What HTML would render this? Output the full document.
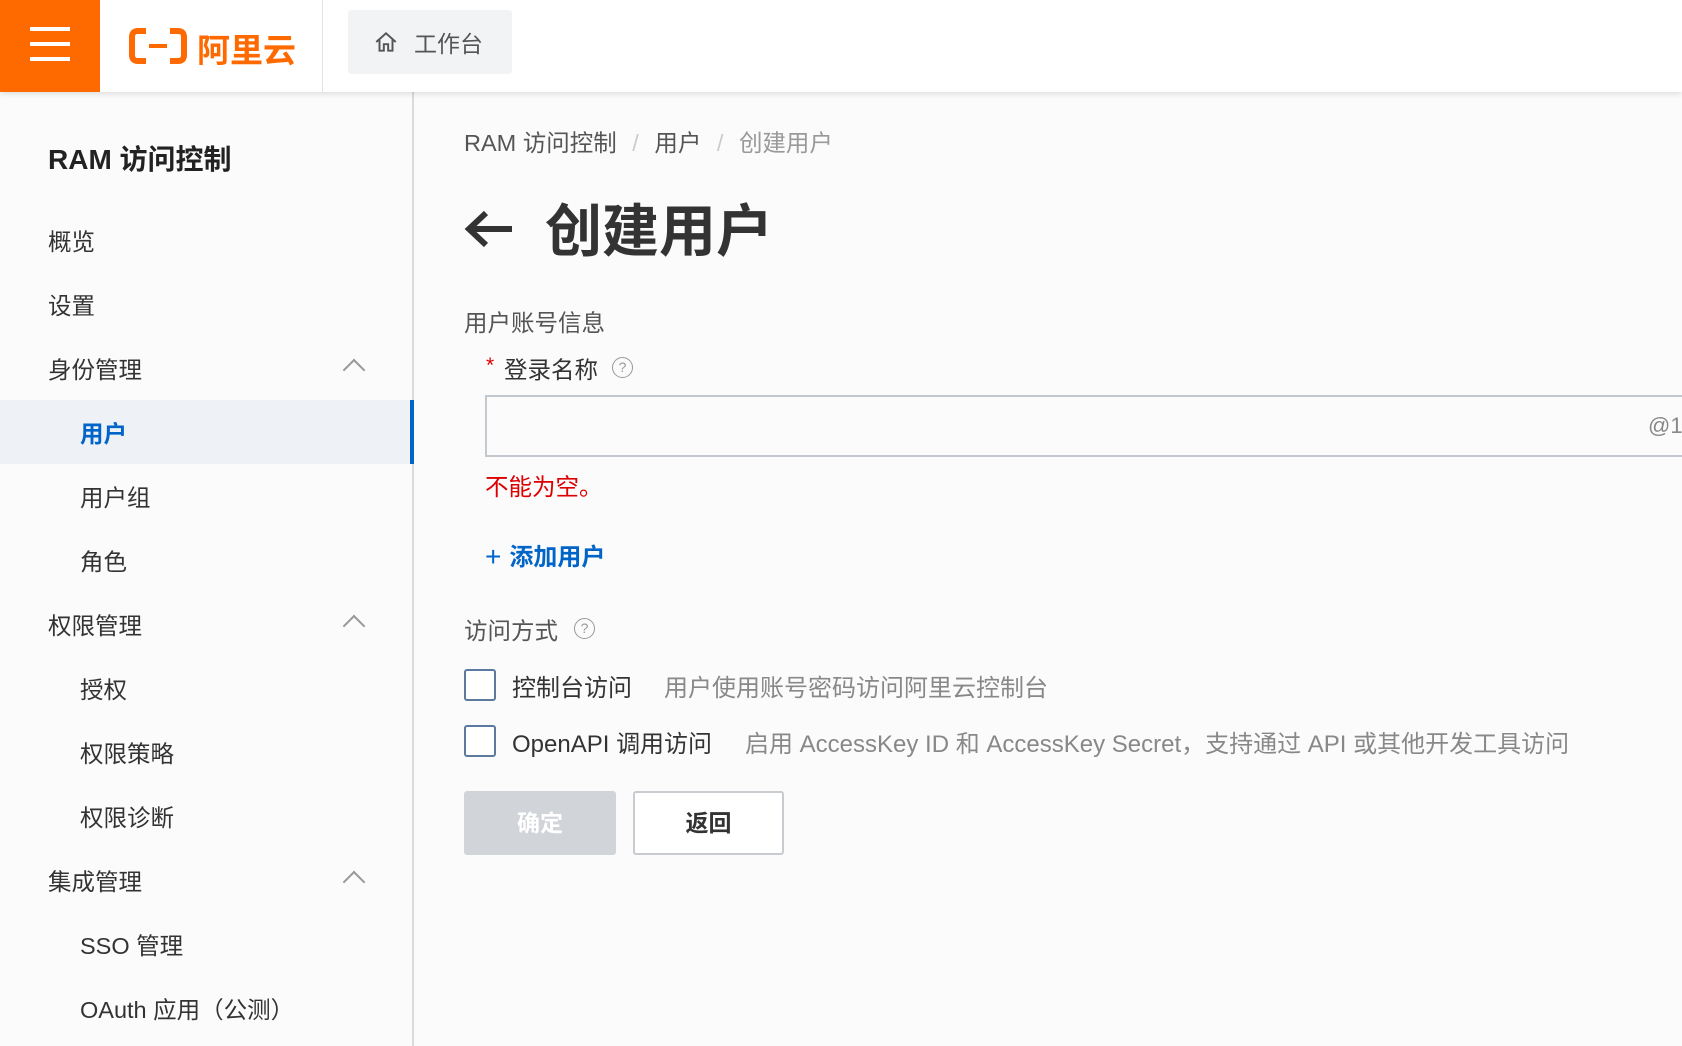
<!DOCTYPE html>
<html><head><meta charset="utf-8"><style>
*{margin:0;padding:0;box-sizing:border-box}
body{width:1682px;height:1046px;overflow:hidden;background:#fbfbfb;font-family:"Liberation Sans","Noto Sans CJK SC",sans-serif;color:#333;position:relative}
.a{position:absolute;white-space:nowrap}
.hdr{position:absolute;left:0;top:0;width:1682px;height:92px;background:#fff;box-shadow:0 2px 6px rgba(0,0,0,.12);z-index:2}
.side{position:absolute;left:0;top:92px;width:414px;height:954px;background:#fbfbfb;border-right:2px solid #d8dbe0}
.mi{position:absolute;left:48px;font-size:23.5px;color:#333}
.sub{left:80px}
.chev{position:absolute;left:346px;width:16px;height:16px;border-left:2px solid #999;border-top:2px solid #999;transform:rotate(45deg)}
.cb{position:absolute;left:464px;width:32px;height:32px;border:2px solid #5b7a9d;border-radius:3px;background:#fff}
</style></head><body>
<div class="hdr">
 <div class="a" style="left:0;top:0;width:100px;height:92px;background:#ff6a00">
  <div class="a" style="left:30px;top:27px;width:40px;height:4px;background:#fff"></div>
  <div class="a" style="left:30px;top:42px;width:40px;height:4px;background:#fff"></div>
  <div class="a" style="left:30px;top:57px;width:40px;height:4px;background:#fff"></div>
 </div>
 <svg class="a" style="left:129px;top:27px" width="58" height="38" viewBox="0 0 58 38"><path d="M17 4H9Q3 4 3 10V28Q3 34 9 34H17M41 4H49Q55 4 55 10V28Q55 34 49 34H41" fill="none" stroke="#ff6a00" stroke-width="6"/><rect x="20" y="17" width="18" height="4" fill="#ff6a00"/></svg>
 <div class="a" style="left:197px;top:24px;font-size:33px;font-weight:bold;color:#ff6a00">阿里云</div>
 <div class="a" style="left:322px;top:0;width:1px;height:92px;background:#e3e3e3"></div>
 <div class="a" style="left:348px;top:10px;width:164px;height:64px;background:#f2f3f5;border-radius:3px"></div>
 <svg class="a" style="left:373px;top:29px" width="26" height="26" viewBox="0 0 24 24"><path d="M3 12L12 4L21 12M6 10V20H10V14H14V20H18V10" fill="none" stroke="#555" stroke-width="1.8"/></svg>
 <div class="a" style="left:414px;top:25px;font-size:23px;color:#555">工作台</div>
</div>
<div class="side">
 <div class="a" style="left:48px;top:46px;font-size:28px;font-weight:bold;color:#222">RAM 访问控制</div>
 <div class="mi" style="top:131px">概览</div>
 <div class="mi" style="top:195px">设置</div>
 <div class="mi" style="top:259px">身份管理</div><div class="chev" style="top:270px"></div>
 <div class="a" style="left:0;top:308px;width:414px;height:64px;background:#eef1f6"></div>
 <div class="a" style="left:410px;top:308px;width:4px;height:64px;background:#0064c8"></div>
 <div class="mi sub" style="top:323px;color:#0064c8;font-weight:bold">用户</div>
 <div class="mi sub" style="top:387px">用户组</div>
 <div class="mi sub" style="top:451px">角色</div>
 <div class="mi" style="top:515px">权限管理</div><div class="chev" style="top:526px"></div>
 <div class="mi sub" style="top:579px">授权</div>
 <div class="mi sub" style="top:643px">权限策略</div>
 <div class="mi sub" style="top:707px">权限诊断</div>
 <div class="mi" style="top:771px">集成管理</div><div class="chev" style="top:782px"></div>
 <div class="mi sub" style="top:835px">SSO 管理</div>
 <div class="mi sub" style="top:899px">OAuth 应用（公测）</div>
</div>
<div class="a" style="left:464px;top:124px;font-size:23.5px;color:#555">RAM 访问控制 <span style="color:#ccc;margin:0 9px">/</span> 用户 <span style="color:#ccc;margin:0 9px">/</span> <span style="color:#999">创建用户</span></div>
<svg class="a" style="left:462px;top:207px" width="54" height="44" viewBox="0 0 54 44"><path d="M50 22H8M24 6L7 22L24 38" fill="none" stroke="#333" stroke-width="6"/></svg>
<div class="a" style="left:545px;top:186px;font-size:57px;font-weight:bold;color:#333">创建用户</div>
<div class="a" style="left:464px;top:304px;font-size:23.5px;color:#555">用户账号信息</div>
<div class="a" style="left:486px;top:354px;font-size:21px;color:#d00">*</div>
<div class="a" style="left:504px;top:351px;font-size:23.5px;color:#333">登录名称</div>
<div class="a" style="left:612px;top:357px;width:21px;height:21px;border:1.5px solid #999;border-radius:50%;font-size:14px;color:#999;text-align:center;line-height:18px">?</div>
<div class="a" style="left:485px;top:395px;width:1220px;height:62px;border:2px solid #c3c7ce;background:#fbfbfb"></div>
<div class="a" style="left:1648px;top:413px;font-size:22px;color:#888">@1</div>
<div class="a" style="left:485px;top:468px;font-size:23.5px;color:#d00">不能为空。</div>
<div class="a" style="left:485px;top:537px;font-size:24px;color:#0064c8;font-weight:bold"><span style="font-weight:normal;font-size:28px;margin-right:8px;position:relative;top:1px">+</span>添加用户</div>
<div class="a" style="left:464px;top:612px;font-size:23.5px;color:#555">访问方式</div>
<div class="a" style="left:574px;top:618px;width:21px;height:21px;border:1.5px solid #999;border-radius:50%;font-size:14px;color:#999;text-align:center;line-height:18px">?</div>
<div class="cb" style="top:669px"></div>
<div class="a" style="left:512px;top:668px;font-size:24px;color:#333">控制台访问</div>
<div class="a" style="left:664px;top:668px;font-size:24px;color:#888">用户使用账号密码访问阿里云控制台</div>
<div class="cb" style="top:725px"></div>
<div class="a" style="left:512px;top:724px;font-size:24px;color:#333">OpenAPI 调用访问</div>
<div class="a" style="left:745px;top:724px;font-size:24px;color:#888">启用 AccessKey ID 和 AccessKey Secret，支持通过 API 或其他开发工具访问</div>
<div class="a" style="left:464px;top:791px;width:152px;height:64px;background:#d1d4d8;border-radius:3px;color:#fff;font-size:23px;font-weight:bold;text-align:center;line-height:64px">确定</div>
<div class="a" style="left:633px;top:791px;width:151px;height:64px;border:2px solid #c8cbd0;border-radius:3px;background:#fff;color:#333;font-size:23px;font-weight:bold;text-align:center;line-height:60px">返回</div>
</body></html>
